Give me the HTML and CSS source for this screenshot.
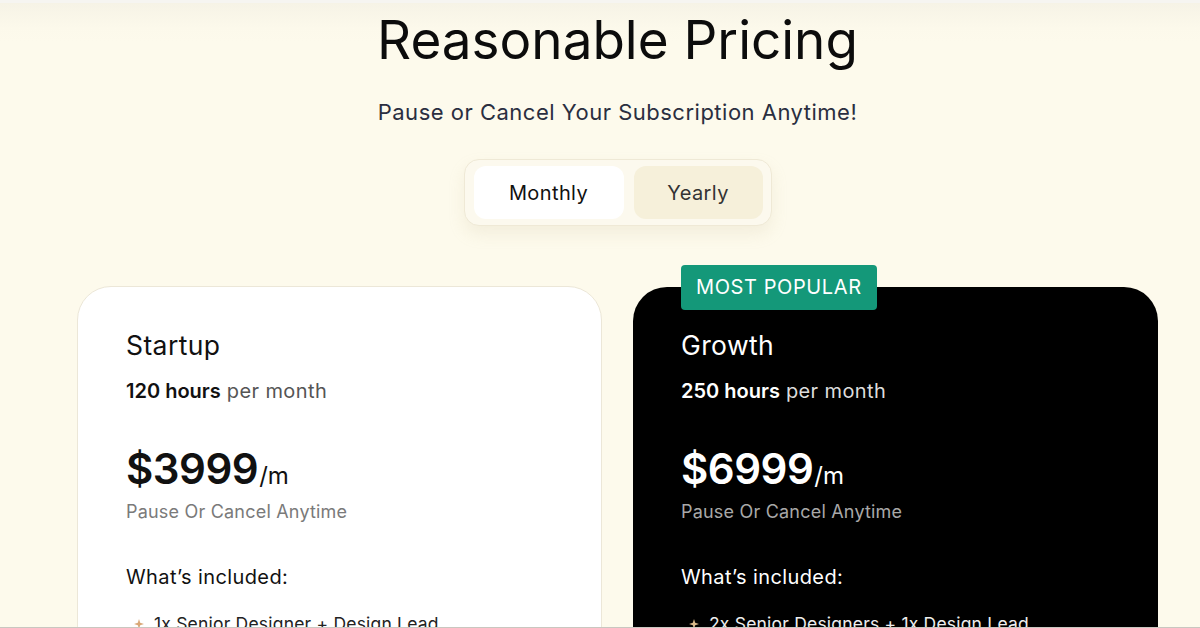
FILE: index.html
```html
<!DOCTYPE html>
<html>
<head>
<meta charset="utf-8">
<link rel="stylesheet" href="styles.css">
</head>
<body>
<div class="page">
  <section class="pricing">
    <h1 class="title">Reasonable Pricing</h1>
    <p class="subtitle">Pause or Cancel Your Subscription Anytime!</p>
    <div class="toggle">
      <button class="tab active">Monthly</button>
      <button class="tab">Yearly</button>
    </div>
    <div class="cards">
      <div class="card light">
        <h2 class="plan">Startup</h2>
        <p class="hours"><strong>120 hours</strong> per month</p>
        <div class="price"><span class="amount">$3999</span><span class="per">/m</span></div>
        <p class="note">Pause Or Cancel Anytime</p>
        <h3 class="inc">What’s included:</h3>
        <ul class="list">
          <li><svg class="star" viewBox="0 0 10 10"><path d="M5 0 L6.2 3.8 L10 5 L6.2 6.2 L5 10 L3.8 6.2 L0 5 L3.8 3.8 Z"/></svg>1x Senior Designer + Design Lead</li>
        </ul>
      </div>
      <div class="card dark">
        <span class="badge">MOST POPULAR</span>
        <h2 class="plan">Growth</h2>
        <p class="hours"><strong>250 hours</strong> per month</p>
        <div class="price"><span class="amount">$6999</span><span class="per">/m</span></div>
        <p class="note">Pause Or Cancel Anytime</p>
        <h3 class="inc">What’s included:</h3>
        <ul class="list">
          <li><svg class="star" viewBox="0 0 10 10"><path d="M5 0 L6.2 3.8 L10 5 L6.2 6.2 L5 10 L3.8 6.2 L0 5 L3.8 3.8 Z"/></svg>2x Senior Designers + 1x Design Lead</li>
        </ul>
      </div>
    </div>
  </section>
</div>
</body>
</html>
```
FILE: styles.css
```css
* { box-sizing: border-box; }
html, body { margin: 0; padding: 0; }
body {
  font-family: Inter, "Noto Sans", sans-serif;
  background: #fdfaec;
  color: #111;
}
.page {
  height: 628px;
  overflow: hidden;
  border-top: 3px solid #f6f5f1;
  border-bottom: 1px solid #c9c7c0;
  background: linear-gradient(#f6f3e6 0px, #fcf9eb 25px, #fdfaec 40px);
  padding-left: 35px;
}
.pricing {
  display: flex;
  flex-direction: column;
  align-items: center;
}
.title {
  margin: 4px 0 0;
  font-size: 53px;
  font-weight: 400;
  letter-spacing: 0;
  line-height: 66px;
  color: #0c0c0c;
}
.subtitle {
  margin: 25px 0 0;
  font-size: 22px;
  line-height: 28px;
  color: #2a2e40;
  letter-spacing: 0.5px;
}
.toggle {
  margin-top: 33px;
  display: flex;
  gap: 10px;
  padding: 6px 8px 6px 9px;
  border: 1px solid #efe9d6;
  border-radius: 15px;
  background: #fcf9ee;
  box-shadow: 0 8px 16px rgba(200, 190, 150, 0.18);
}
.tab {
  font-family: inherit;
  font-size: 20px;
  letter-spacing: 0.4px;
  border: none;
  border-radius: 12px;
  height: 53px;
  padding: 0;
  color: #333;
  background: #f6f0da;
  width: 129px;
}
.tab.active {
  background: #fff;
  color: #111;
  width: 150px;
}
.cards {
  margin-top: 60px;
  display: flex;
  gap: 31px;
  align-items: flex-start;
}
.card {
  position: relative;
  width: 525px;
  height: 420px;
  border-radius: 34px;
  padding: 40px 48px;
}
.card.light {
  background: #fff;
  border: 1px solid #ece7d8;
}
.card.dark {
  background: #000;
  color: #fff;
  margin-top: 1px;
}
.badge {
  position: absolute;
  top: -22px;
  left: 48px;
  background: #149879;
  color: #fff;
  font-size: 20px;
  letter-spacing: 0.6px;
  padding: 0 15px;
  height: 45px;
  line-height: 45px;
  border-radius: 4px;
}
.plan {
  margin: 0;
  font-size: 26.5px;
  letter-spacing: 0.4px;
  font-weight: 400;
  line-height: 36px;
}
.hours {
  margin: 15px 0 0;
  font-size: 20px;
  letter-spacing: 0.4px;
  line-height: 26px;
  color: #555;
}
.hours strong { font-weight: 600; color: #111; letter-spacing: 0; }
.dark .hours { color: #ddd; }
.dark .hours strong { color: #fff; }
.price {
  margin-top: 40px;
  display: flex;
  align-items: baseline;
}
.amount {
  font-size: 42px;
  font-weight: 600;
  line-height: 50px;
  letter-spacing: -0.5px;
}
.per {
  font-size: 24px;
  margin-left: 1px;
}
.note {
  margin: 6px 0 0;
  font-size: 18px;
  letter-spacing: 0.2px;
  line-height: 24px;
  color: #7a7a7a;
}
.dark .note { color: #a8a8a8; }
.inc {
  margin: 40px 0 0;
  font-size: 20px;
  letter-spacing: 0.4px;
  font-weight: 400;
  line-height: 26px;
}
.list {
  list-style: none;
  margin: 22px 0 0;
  padding: 0 0 0 8px;
}
.list li {
  display: flex;
  align-items: center;
  gap: 10px;
  font-size: 17.5px;
  letter-spacing: 0.2px;
  line-height: 24px;
  color: #222;
}
.dark .list li { color: #eee; }
.star {
  width: 10px;
  height: 10px;
  fill: #d9a877;
}
.dark .star { fill: #d8b98a; }
```
